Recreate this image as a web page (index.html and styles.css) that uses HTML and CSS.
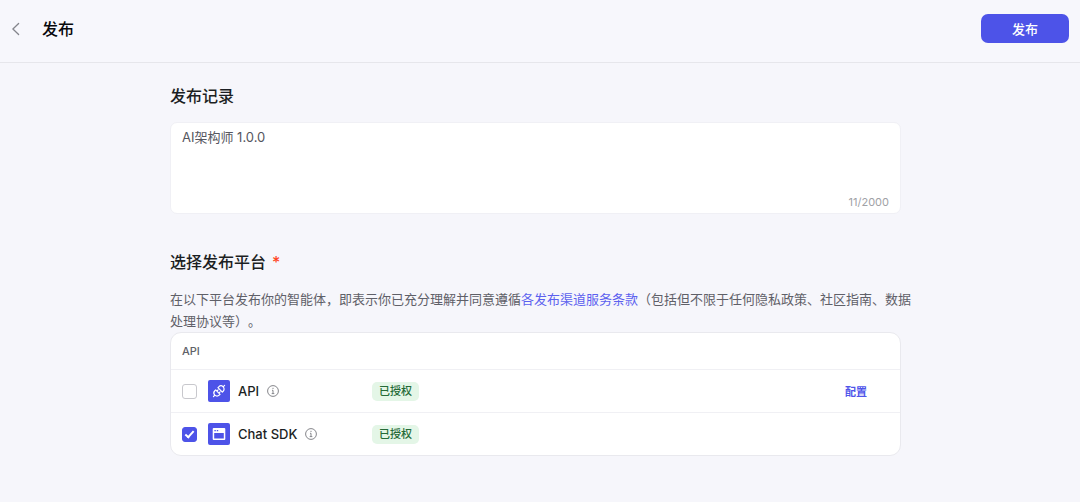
FILE: index.html
```html
<!DOCTYPE html>
<html lang="zh-CN">
<head>
<meta charset="utf-8">
<meta name="viewport" content="width=device-width, initial-scale=1">
<title>发布</title>
<link rel="stylesheet" href="styles.css">
</head>
<body>
<header class="topbar">
  <button class="back" type="button" aria-label="返回">
    <svg width="16" height="16" viewBox="0 0 16 16" fill="none" stroke="currentColor" stroke-width="1.3" stroke-linecap="round" stroke-linejoin="round"><path d="M10.6 2.5 4.9 8l5.7 5.5"/></svg>
  </button>
  <h1 class="page-title">发布</h1>
  <button class="publish" type="button">发布</button>
</header>
<main class="content">
  <section class="record">
    <h2 class="heading"><label for="record">发布记录</label></h2>
    <div class="record-box">
      <textarea class="record-input" id="record" maxlength="2000">AI架构师 1.0.0</textarea>
      <div class="counter">11/2000</div>
    </div>
  </section>
  <section class="platforms">
    <h2 class="heading">选择发布平台<span class="required">*</span></h2>
    <p class="terms">在以下平台发布你的智能体，即表示你已充分理解并同意遵循<a class="link" href="#">各发布渠道服务条款</a>（包括但不限于任何隐私政策、社区指南、数据处理协议等）。</p>
    <div class="card">
      <table class="table">
        <thead>
          <tr><th class="group" colspan="3" scope="colgroup">API</th></tr>
        </thead>
        <tbody>
          <tr>
            <td class="cell cell-name">
              <div class="platform">
                <input class="check" type="checkbox" id="p-api">
                <label class="platform-label" for="p-api">
                  <svg class="logo" width="22" height="22" viewBox="0 0 22 22" fill="none" stroke="#fff" stroke-width="1.2" stroke-linecap="round" stroke-linejoin="round"><rect width="22" height="22" rx="2" fill="#4d53e8" stroke="none"/><g transform="rotate(-45 11 11)"><path d="M3.2 11h2M9.4 7.9H8.2a3.1 3.1 0 0 0 0 6.2h1.2zM9.4 9.6h1.7M9.4 12.4h1.7M12.6 7.9h1.2a3.1 3.1 0 0 1 0 6.2h-1.2zM16.9 11h2"/></g></svg>
                  API
                </label>
                <svg class="info" width="12" height="12" viewBox="0 0 12 12" fill="none" stroke="currentColor"><circle cx="6" cy="6" r="5.4"/><path d="M6 2.8v1.2M5 5.3h1v3.2M4.7 8.6h2.6"/></svg>
              </div>
            </td>
            <td class="cell"><span class="tag">已授权</span></td>
            <td class="cell cell-action"><button class="configure" type="button">配置</button></td>
          </tr>
          <tr>
            <td class="cell cell-name">
              <div class="platform">
                <input class="check" type="checkbox" id="p-sdk" checked>
                <label class="platform-label" for="p-sdk">
                  <svg class="logo" width="22" height="22" viewBox="0 0 22 22"><rect width="22" height="22" rx="2" fill="#4d53e8"/><path fill="#fff" fill-rule="evenodd" d="M5.7 5h10.6q1 0 1 1v10q0 1-1 1H5.7q-1 0-1-1V6q0-1 1-1zM6.2 10v5.5h9.6V10z"/><path stroke="#4d53e8" stroke-width="1.2" d="M6.4 7.6h1.4M8.8 7.6h1.4"/></svg>
                  Chat SDK
                </label>
                <svg class="info" width="12" height="12" viewBox="0 0 12 12" fill="none" stroke="currentColor"><circle cx="6" cy="6" r="5.4"/><path d="M6 2.8v1.2M5 5.3h1v3.2M4.7 8.6h2.6"/></svg>
              </div>
            </td>
            <td class="cell"><span class="tag">已授权</span></td>
            <td class="cell cell-action"></td>
          </tr>
        </tbody>
      </table>
    </div>
  </section>
</main>
</body>
</html>
```
FILE: styles.css
```css
* {
  box-sizing: border-box;
}

body {
  margin: 0;
  background: #f6f6fb;
  color: #1c1f23;
  font-family: Inter, "Noto Sans CJK SC", sans-serif;
  font-size: 13px;
  line-height: 22px;
  text-spacing-trim: space-all;
}

button,
textarea {
  font: inherit;
}

button {
  padding: 0;
  border: 0;
  background: none;
  cursor: pointer;
}

.topbar {
  display: flex;
  align-items: center;
  padding: 14px 11px 19px 8px;
  border-bottom: 1px solid #e6e6eb;
  background: #f7f7fc;
}

.back {
  display: flex;
  margin-right: 18px;
  color: #84858c;
}

.page-title {
  flex: 1;
  margin: 0;
  color: #08090c;
  font-size: 16px;
  font-weight: 500;
  line-height: 24px;
}

.publish {
  width: 88px;
  height: 29px;
  border-radius: 7px;
  background: #4d53e8;
  color: #fff;
  font-weight: 500;
}

.content {
  max-width: 772px;
  margin: 0 auto;
  padding: 21px 25px 40px 16px;
}

.heading {
  margin: 0;
  font-size: 16px;
  font-weight: 500;
  line-height: 24px;
}

.record-box {
  margin-top: 14px;
  border: 1px solid #f0f0f5;
  border-radius: 7px;
  background: #fff;
}

.record-input {
  display: block;
  width: 100%;
  height: 69px;
  padding: 3px 11px;
  border: 0;
  outline: 0;
  resize: none;
  background: none;
  color: #55565e;
}

.counter {
  padding: 0 11px;
  color: #a0a1a6;
  font-size: 11px;
  line-height: 21px;
  text-align: right;
}

.platforms {
  margin-top: 36px;
}

.required {
  margin-left: 6px;
  color: #ff441e;
}

.terms {
  margin: 14px -12px 0 0;
  color: #5f6068;
}

.link {
  color: #5c61ef;
  text-decoration: none;
}

.card {
  overflow: hidden;
  border: 1px solid #e9e9ee;
  border-radius: 11px;
  background: #fff;
}

.table {
  width: 100%;
  border-spacing: 0;
}

.group {
  height: 36px;
  padding: 0 11px;
  color: #606168;
  font-size: 11px;
  font-weight: 500;
  text-align: left;
}

.cell {
  height: 43px;
  padding: 0;
  border-top: 1px solid #f0f0f4;
}

.cell-name {
  width: 201px;
  padding-left: 11px;
}

.cell-action {
  padding-right: 33px;
  text-align: right;
}

.platform {
  display: flex;
  align-items: center;
}

.check {
  display: grid;
  place-content: center;
  appearance: none;
  width: 15px;
  height: 15px;
  margin: 0 11px 0 0;
  border: 1px solid #c8c8cd;
  border-radius: 3px;
  background: #fff;
}

.check:checked {
  border-color: #4d53e8;
  background: #4d53e8;
}

.check:checked::before {
  content: "";
  box-sizing: border-box;
  width: 5px;
  height: 9px;
  margin-bottom: 2px;
  border: solid #fff;
  border-width: 0 2px 2px 0;
  transform: rotate(42deg);
}

.platform-label {
  display: flex;
  align-items: center;
  gap: 8px;
  font-weight: 500;
}

.info {
  margin-left: 8px;
  color: #85868b;
}

.tag {
  display: block;
  width: fit-content;
  padding: 0 7px;
  border-radius: 5px;
  background: #e4f6e7;
  color: #266b38;
  font-size: 11px;
  font-weight: 500;
  line-height: 19px;
}

.configure {
  color: #5055ea;
  font-size: 11px;
  font-weight: 700;
}
```
